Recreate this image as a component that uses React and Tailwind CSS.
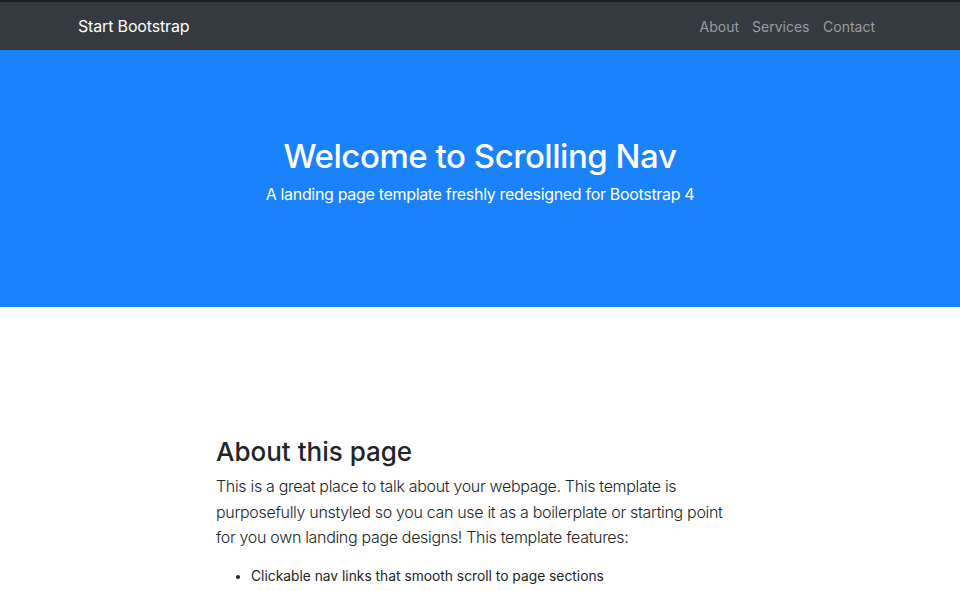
export default function App() {
  const font = { fontFamily: 'Inter, "Liberation Sans", sans-serif' };
  return (
    <div style={font} className="w-full min-h-[591px] bg-white text-[#212529]">
      <nav className="h-[50px] bg-[#343a40] border-t-2 border-[#1e1f21]">
        <div className="w-[804px] mx-auto h-[48px] flex items-center justify-between">
          <span className="text-white text-[16px] leading-[24px] tracking-[-0.01em]">Start Bootstrap</span>
          <ul className="flex items-center">
            <li className="px-[6.5px] text-[14px] text-[#9b9ea1]">About</li>
            <li className="px-[6.5px] text-[14px] text-[#9b9ea1]">Services</li>
            <li className="px-[7px] text-[14px] text-[#9b9ea1]">Contact</li>
          </ul>
        </div>
      </nav>
      <header className="h-[257px] bg-[#1a82fb] text-white text-center pt-[86px]">
        <h1 className="text-[33px] leading-[40px] font-medium tracking-[-0.014em]">Welcome to Scrolling Nav</h1>
        <p className="text-[16px] leading-[26px] mt-[5px] tracking-[-0.02em]">A landing page template freshly redesigned for Bootstrap 4</p>
      </header>
      <section className="pt-[128px]">
        <div className="w-[528px] mx-auto">
          <h2 className="text-[26px] leading-[34px] font-medium">About this page</h2>
          <p className="text-[16px] leading-[25.5px] mt-[5px] font-light tracking-[-0.02em]">
            This is a great place to talk about your webpage. This template is purposefully unstyled so you can use it as a boilerplate or starting point for you own landing page designs! This template features:
          </p>
          <ul className="list-disc pl-[35px] mt-[14px] text-[13.8px] leading-[22px]">
            <li>Clickable nav links that smooth scroll to page sections</li>
            <li>Responsive behavior when clicking nav links perfect for a one page website</li>
            <li>Bootstrap's scrollspy feature which highlights which section of the page you're on in the navbar</li>
            <li>Minimal custom CSS so you are free to explore your own unique design options</li>
          </ul>
        </div>
      </section>
    </div>
  );
}
